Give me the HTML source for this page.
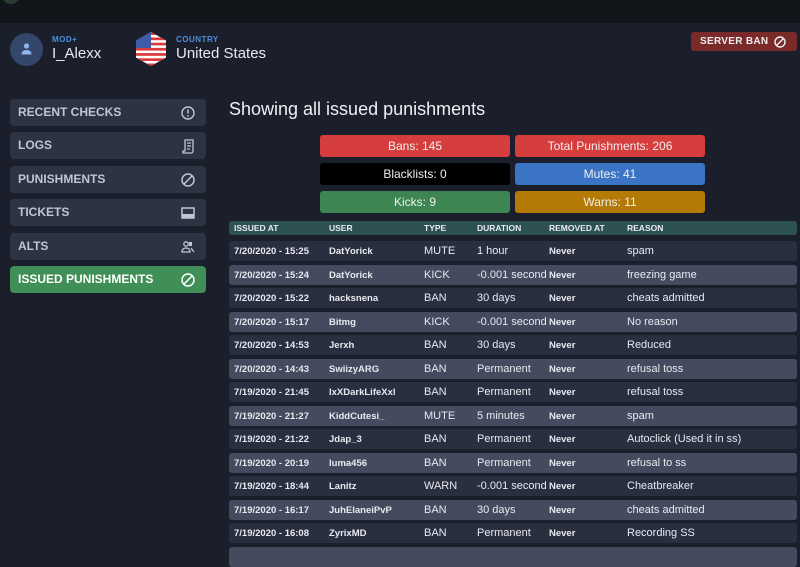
<!DOCTYPE html>
<html><head><style>
*{margin:0;padding:0;box-sizing:border-box}
body{width:800px;height:553px;background:#1b1f2b;font-family:"Liberation Sans",sans-serif;color:#e8eaf0;position:relative;overflow:hidden}
.top{position:absolute;left:0;top:0;width:800px;height:23px;background:#121519}
.abs{position:absolute}
.nav{position:absolute;left:10px;width:196px;height:27px;background:#2e3344;border-radius:4px;font-weight:bold;font-size:12px;color:#c0c5d3;padding-left:8px;line-height:27px}
.nav.active{background:#3f8f56;color:#fff}
.nav svg{position:absolute;right:10px;top:6px}
.stat{position:absolute;width:190px;height:22px;border-radius:3px;font-size:12px;text-align:center;line-height:22px;color:#f0f0f0}
.row{position:absolute;left:229px;width:568px;height:20px;border-radius:3px;font-size:11px;line-height:20px}
.row span{position:absolute;top:0;line-height:20px;white-space:nowrap}
.row span.b{top:1px}
.b{font-weight:bold;font-size:9.5px}
.c1{left:5px}.c2{left:100px}.c3{left:195px}.c4{left:248px}.c5{left:320px}.c6{left:398px}
</style></head><body>
<div class="top"></div>
<div class="abs" style="left:2px;top:-14px;width:18px;height:18px;border-radius:50%;background:#2c3a34"></div>
<div class="abs" style="left:10px;top:33px;width:33px;height:33px;border-radius:50%;background:#34466a"></div>
<svg class="abs" style="left:20px;top:42px" width="13" height="14" viewBox="0 0 13 14"><circle cx="6.5" cy="4" r="2.6" fill="#8fb6f0"/><path d="M1.5 12.5c0-3 2-4.5 5-4.5s5 1.5 5 4.5z" fill="#8fb6f0"/></svg>
<div class="abs" style="left:52px;top:35px;font-size:8px;font-weight:bold;color:#4c8fe0;letter-spacing:.5px">MOD+</div>
<div class="abs" style="left:52px;top:45px;font-size:15px">I_Alexx</div>
<svg class="abs" style="left:135px;top:32px" width="32" height="34" viewBox="0 0 32 34"><defs><clipPath id="h"><polygon points="16,0 31,8.5 31,25.5 16,34 1,25.5 1,8.5"/></clipPath></defs><g clip-path="url(#h)"><rect width="32" height="34" fill="#fff"/><g fill="#d93a3a"><rect y="0" width="32" height="3"/><rect y="5.5" width="32" height="2.7"/><rect y="10.7" width="32" height="2.7"/><rect y="15.9" width="32" height="2.7"/><rect y="21.1" width="32" height="2.7"/><rect y="26.3" width="32" height="2.7"/><rect y="31.5" width="32" height="3"/></g><rect width="16" height="16" fill="#3d5ba8"/></g></svg>
<div class="abs" style="left:176px;top:35px;font-size:8px;font-weight:bold;color:#4c8fe0;letter-spacing:.5px">COUNTRY</div>
<div class="abs" style="left:176px;top:45px;font-size:15px">United States</div>
<div class="abs" style="left:691px;top:32px;width:106px;height:19px;background:#7b2a2a;border-radius:3px;font-size:10px;font-weight:bold;line-height:19px;padding-left:9px;color:#eee;white-space:nowrap;letter-spacing:.3px">SERVER BAN</div>
<svg class="abs" style="left:774px;top:36px" width="12" height="12" viewBox="0 0 12 12"><circle cx="6" cy="6" r="5" fill="none" stroke="#eee" stroke-width="1.4"/><line x1="2.5" y1="9.5" x2="9.5" y2="2.5" stroke="#eee" stroke-width="1.4"/></svg>

<div class="nav" style="top:99px">RECENT CHECKS<svg width="16" height="16" viewBox="0 0 16 16"><circle cx="8" cy="8" r="6" fill="none" stroke="#c0c5d3" stroke-width="1.4"/><line x1="8" y1="4.5" x2="8" y2="8.5" stroke="#c0c5d3" stroke-width="1.5"/><circle cx="8" cy="11" r=".9" fill="#c0c5d3"/></svg></div>
<div class="nav" style="top:132px">LOGS<svg width="16" height="16" viewBox="0 0 16 16"><path d="M5 2h8v11a2 2 0 0 1-2 2H3v-2h2z" fill="none" stroke="#c0c5d3" stroke-width="1.3"/><path d="M7 5h4M7 8h4M7 11h3" stroke="#c0c5d3" stroke-width="1.2"/></svg></div>
<div class="nav" style="top:166px">PUNISHMENTS<svg width="16" height="16" viewBox="0 0 16 16"><circle cx="8" cy="8" r="6" fill="none" stroke="#c0c5d3" stroke-width="1.5"/><line x1="4" y1="12" x2="12" y2="4" stroke="#c0c5d3" stroke-width="1.5"/></svg></div>
<div class="nav" style="top:199px">TICKETS<svg width="16" height="16" viewBox="0 0 16 16"><rect x="2" y="3" width="12" height="10" fill="none" stroke="#c0c5d3" stroke-width="1.5"/><rect x="2" y="9" width="12" height="4" fill="#c0c5d3"/></svg></div>
<div class="nav" style="top:233px">ALTS<svg width="16" height="16" viewBox="0 0 16 16"><circle cx="6" cy="5" r="2.2" fill="none" stroke="#c0c5d3" stroke-width="1.3"/><rect x="9" y="3" width="3" height="4" fill="#c0c5d3"/><path d="M2 13c0-3 2-4 4-4s4 1 4 4zM11 9l3 4" fill="none" stroke="#c0c5d3" stroke-width="1.3"/></svg></div>
<div class="nav active" style="top:266px">ISSUED PUNISHMENTS<svg width="16" height="16" viewBox="0 0 16 16"><circle cx="8" cy="8" r="6" fill="none" stroke="#fff" stroke-width="1.5"/><line x1="4" y1="12" x2="12" y2="4" stroke="#fff" stroke-width="1.5"/></svg></div>

<div class="abs" style="left:229px;top:99px;font-size:18px;color:#eef0f4">Showing all issued punishments</div>
<div class="stat" style="left:320px;top:135px;background:#d63d3d">Bans: 145</div>
<div class="stat" style="left:515px;top:135px;background:#d63d3d">Total Punishments: 206</div>
<div class="stat" style="left:320px;top:163px;background:#000">Blacklists: 0</div>
<div class="stat" style="left:515px;top:163px;background:#3b74c4">Mutes: 41</div>
<div class="stat" style="left:320px;top:191px;background:#3d8553">Kicks: 9</div>
<div class="stat" style="left:515px;top:191px;background:#b37a05">Warns: 11</div>

<div class="row b" style="top:221px;height:14px;line-height:14px;background:#2d5152;font-size:8.5px"><span class="c1" style="line-height:14px;top:0">ISSUED AT</span><span class="c2" style="line-height:14px;top:0">USER</span><span class="c3" style="line-height:14px;top:0">TYPE</span><span class="c4" style="line-height:14px;top:0">DURATION</span><span class="c5" style="line-height:14px;top:0">REMOVED AT</span><span class="c6" style="line-height:14px;top:0">REASON</span></div>

<div class="row" style="top:241px;background:#2a2f40"><span class="c1 b">7/20/2020 - 15:25</span><span class="c2 b">DatYorick</span><span class="c3">MUTE</span><span class="c4">1 hour</span><span class="c5 b">Never</span><span class="c6">spam</span></div>
<div class="row" style="top:264.5px;background:#444b5e"><span class="c1 b">7/20/2020 - 15:24</span><span class="c2 b">DatYorick</span><span class="c3">KICK</span><span class="c4">-0.001 second</span><span class="c5 b">Never</span><span class="c6">freezing game</span></div>
<div class="row" style="top:288px;background:#2a2f40"><span class="c1 b">7/20/2020 - 15:22</span><span class="c2 b">hacksnena</span><span class="c3">BAN</span><span class="c4">30 days</span><span class="c5 b">Never</span><span class="c6">cheats admitted</span></div>
<div class="row" style="top:311.5px;background:#444b5e"><span class="c1 b">7/20/2020 - 15:17</span><span class="c2 b">Bitmg</span><span class="c3">KICK</span><span class="c4">-0.001 second</span><span class="c5 b">Never</span><span class="c6">No reason</span></div>
<div class="row" style="top:335px;background:#2a2f40"><span class="c1 b">7/20/2020 - 14:53</span><span class="c2 b">Jerxh</span><span class="c3">BAN</span><span class="c4">30 days</span><span class="c5 b">Never</span><span class="c6">Reduced</span></div>
<div class="row" style="top:358.5px;background:#444b5e"><span class="c1 b">7/20/2020 - 14:43</span><span class="c2 b">SwiizyARG</span><span class="c3">BAN</span><span class="c4">Permanent</span><span class="c5 b">Never</span><span class="c6">refusal toss</span></div>
<div class="row" style="top:382px;background:#2a2f40"><span class="c1 b">7/19/2020 - 21:45</span><span class="c2 b">lxXDarkLifeXxl</span><span class="c3">BAN</span><span class="c4">Permanent</span><span class="c5 b">Never</span><span class="c6">refusal toss</span></div>
<div class="row" style="top:405.5px;background:#444b5e"><span class="c1 b">7/19/2020 - 21:27</span><span class="c2 b">KiddCutesi_</span><span class="c3">MUTE</span><span class="c4">5 minutes</span><span class="c5 b">Never</span><span class="c6">spam</span></div>
<div class="row" style="top:429px;background:#2a2f40"><span class="c1 b">7/19/2020 - 21:22</span><span class="c2 b">Jdap_3</span><span class="c3">BAN</span><span class="c4">Permanent</span><span class="c5 b">Never</span><span class="c6">Autoclick (Used it in ss)</span></div>
<div class="row" style="top:452.5px;background:#444b5e"><span class="c1 b">7/19/2020 - 20:19</span><span class="c2 b">luma456</span><span class="c3">BAN</span><span class="c4">Permanent</span><span class="c5 b">Never</span><span class="c6">refusal to ss</span></div>
<div class="row" style="top:476px;background:#2a2f40"><span class="c1 b">7/19/2020 - 18:44</span><span class="c2 b">Lanitz</span><span class="c3">WARN</span><span class="c4">-0.001 second</span><span class="c5 b">Never</span><span class="c6">Cheatbreaker</span></div>
<div class="row" style="top:499.5px;background:#444b5e"><span class="c1 b">7/19/2020 - 16:17</span><span class="c2 b">JuhElaneiPvP</span><span class="c3">BAN</span><span class="c4">30 days</span><span class="c5 b">Never</span><span class="c6">cheats admitted</span></div>
<div class="row" style="top:523px;background:#2a2f40"><span class="c1 b">7/19/2020 - 16:08</span><span class="c2 b">ZyrixMD</span><span class="c3">BAN</span><span class="c4">Permanent</span><span class="c5 b">Never</span><span class="c6">Recording SS</span></div>
<div class="row" style="top:547px;background:#444b5e"></div>
</body></html>
